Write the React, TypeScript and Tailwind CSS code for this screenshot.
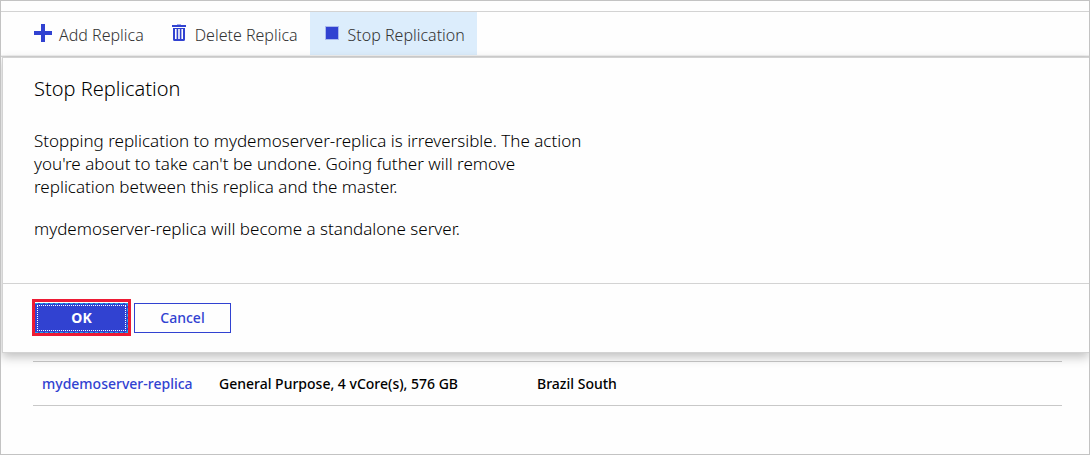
import React from "react";

function PlusIcon() {
  return (
    <svg width="18" height="18" viewBox="0 0 18 18" aria-hidden="true">
      <path d="M7 0h4v7h7v4h-7v7H7v-7H0V7h7z" fill="#3142d1" />
    </svg>
  );
}

function TrashIcon() {
  return (
    <svg width="14" height="17" viewBox="0 0 14 17" aria-hidden="true">
      <path d="M5 0h4v1H5z" fill="#a5adea" />
      <path d="M0 1h14v2H0z" fill="#3142d1" />
      <path
        fillRule="evenodd"
        d="M1 4h12v11.500a1.500 1.500 0 0 1-1.500 1.500h-9A1.500 1.500 0 0 1 1 15.500zM3 5v10h1.600V5zM6.200 5v10h1.600V5zM9.400 5v10H11V5z"
        fill="#3142d1"
      />
    </svg>
  );
}

function StopIcon() {
  return (
    <svg width="14" height="14" viewBox="0 0 14 14" aria-hidden="true">
      <path d="M0 0h14v14H0z" fill="#a9b9ee" />
      <path d="M1 1h12v12H1z" fill="#3142d1" />
    </svg>
  );
}

function Toolbar() {
  return (
    <div
      role="toolbar"
      className="flex h-11 border-b border-[#f0f0f0] pl-5 text-[16px] leading-5 font-light text-[#333]"
    >
      <button type="button" className="flex items-start gap-[7px] px-[13px]">
        <span className="pt-3">
          <PlusIcon />
        </span>
        <span className="pt-[13px]">Add Replica</span>
      </button>
      <button type="button" className="ml-[2px] flex items-start gap-[9px] pr-3 pl-[13px]">
        <span className="pt-3">
          <TrashIcon />
        </span>
        <span className="pt-[13px]">Delete Replica</span>
      </button>
      <button type="button" className="flex items-start gap-[9px] bg-[#dcedfc] pr-3 pl-[15px]">
        <span className="pt-[14px]">
          <StopIcon />
        </span>
        <span className="pt-[13px]">Stop Replication</span>
      </button>
    </div>
  );
}

function StopDialog() {
  return (
    <section
      role="dialog"
      aria-labelledby="dialog-title"
      className="relative border-y border-l border-[#d3d3d3] bg-[#fefefe] shadow-[0_4px_10px_rgba(0,0,0,0.25)]"
    >
      <div className="px-[31px] pt-[19px] pb-[43px] text-black">
        <h2 id="dialog-title" className="text-[20px] leading-6 font-light">
          Stop Replication
        </h2>
        <p className="mt-7 text-[17px] leading-[23px] font-light">
          Stopping replication to mydemoserver-replica is irreversible. The action
          <br />
          you're about to take can't be undone. Going futher will remove
          <br />
          replication between this replica and the master.
        </p>
        <p className="mt-[19px] text-[17px] leading-[23px] font-light">
          mydemoserver-replica will become a standalone server.
        </p>
      </div>
      <div className="flex gap-[3px] border-t border-[#d3d3d3] px-[29px] pt-[15px] pb-4">
        <div className="border-3 border-[#ed1b34] pt-px">
          <button
            type="button"
            className="block h-[30px] w-[93px] border border-l-0 border-dashed border-[#1fa8e8] bg-[#3142d1] p-px pl-[2px] text-[14px] font-bold text-white"
          >
            <span className="flex h-full items-center justify-center border border-dotted border-white pb-px">
              OK
            </span>
          </button>
        </div>
        <button
          type="button"
          className="mt-1 h-[30px] w-[97px] border border-[#3142d1] pb-px text-[14px] font-medium text-[#3142d1]"
        >
          Cancel
        </button>
      </div>
    </section>
  );
}

export default function App() {
  return (
    <main className="min-h-screen border border-[#c3c3c3] bg-[#fefefe] font-['Noto_Sans','Open_Sans',sans-serif]">
      <div className="h-[11px] border-b border-[#d3d3d3]" />
      <Toolbar />
      <div className="overflow-x-clip border-t border-[#d3d3d3] pl-px">
        <StopDialog />
      </div>
      <div className="pt-2 pr-[27px] pl-8">
        <table className="w-full table-fixed border-y border-[#c8c8c8] text-left text-[14px] font-medium text-black">
          <colgroup>
            <col className="w-[177px]" />
            <col className="w-[318px]" />
            <col />
          </colgroup>
          <tbody>
            <tr className="h-11">
              <td className="pl-[9px]">
                <a href="#replica" className="text-[#3142d1]">
                  mydemoserver-replica
                </a>
              </td>
              <td className="pl-[9px]">General Purpose, 4 vCore(s), 576 GB</td>
              <td className="pl-[9px]">Brazil South</td>
            </tr>
          </tbody>
        </table>
      </div>
    </main>
  );
}
